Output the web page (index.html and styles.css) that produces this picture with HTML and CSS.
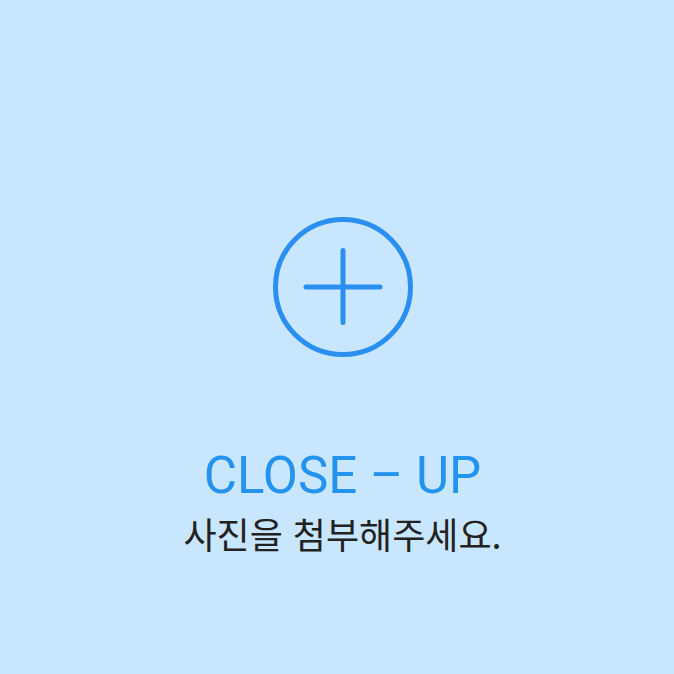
FILE: index.html
```html
<!DOCTYPE html>
<html lang="ko">
<head>
<meta charset="utf-8">
<link rel="stylesheet" href="styles.css">
</head>
<body>
<main class="upload">
  <svg class="upload-icon" width="144" height="144" viewBox="0 0 144 144" aria-hidden="true">
    <circle cx="72" cy="72" r="67.5" fill="none" stroke="#2a8ff0" stroke-width="5"/>
    <path d="M72 35.5v72M35 72h74" fill="none" stroke="#2a8ff0" stroke-width="5" stroke-linecap="round"/>
  </svg>
  <h1 class="upload-title">CLOSE – UP</h1>
  <p class="upload-desc">사진을 첨부해주세요.</p>
</main>
</body>
</html>
```
FILE: styles.css
```css
html, body {
  margin: 0;
  padding: 0;
}
body {
  background: #c9e6ff;
  width: 674px;
  height: 674px;
  overflow: hidden;
}
.upload {
  display: flex;
  flex-direction: column;
  align-items: center;
  padding: 215px 0 0 11px;
}
.upload-icon {
  display: block;
}
.upload-title {
  margin: 89px 0 0;
  font-family: Roboto, "Noto Sans", sans-serif;
  font-weight: 400;
  font-size: 51px;
  line-height: 56px;
  color: #2393ef;
}
.upload-desc {
  margin: 7px 0 0;
  font-family: "Noto Sans CJK KR", sans-serif;
  font-size: 36px;
  line-height: 44px;
  color: #222;
}
```
